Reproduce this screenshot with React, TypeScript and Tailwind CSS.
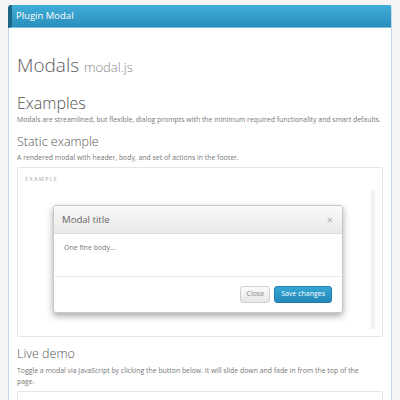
import React from "react";

const App = () => {
  return (
    <div
      className="w-[400px] h-[400px] overflow-hidden bg-[#f4f4f4] pt-[5px] px-[8px]"
      style={{ fontFamily: '"Open Sans", "Noto Sans", sans-serif' }}
    >
      <div className="h-[420px] bg-white border-x border-[#c6d7ee] rounded-t-[3px]">
        {/* panel header */}
        <div className="h-[23px] -ml-px flex items-center bg-gradient-to-b from-[#40aed8] to-[#2a8ebc] border-l-[4px] border-[#1d6584] rounded-tl-[3px] pl-[4px] border-b border-b-[#7cc0de]">
          <span className="text-white text-[9.5px] leading-none">Plugin Modal</span>
        </div>

        <div className="px-[8px] text-[#555]">
          <h1 className="mt-[27px] text-[19px] leading-[20px] font-light text-[#5a5a5a]">
            Modals <span className="text-[13px] text-[#888]">modal.js</span>
          </h1>

          <h2 className="mt-[17px] text-[16px] leading-[18px] font-light">Examples</h2>
          <p className="mt-[3px] text-[6.9px] leading-[10px] text-[#777] whitespace-nowrap">
            Modals are streamlined, but flexible, dialog prompts with the minimum required functionality and smart defaults.
          </p>

          <h3 className="mt-[10px] text-[12.5px] leading-[14px] font-light">Static example</h3>
          <p className="mt-[4px] text-[6.9px] leading-[10px] text-[#777]">
            A rendered modal with header, body, and set of actions in the footer.
          </p>

          {/* example box */}
          <div className="mt-[4px] h-[170px] border border-[#e6e6e6] rounded-[2px] pt-[8px] pl-[7px] pr-[7px] flex flex-col">
            <span className="text-[5.5px] tracking-[1.2px] text-[#bbb] font-semibold leading-[6px]">EXAMPLE</span>
            <div className="flex flex-1 pb-[7px]">
              <div className="flex-1 flex justify-center pt-[23px]">
                <div className="w-[290px] h-[108px] bg-white border border-[#c9c9c9] rounded-[3px] shadow-[0_3px_7px_rgba(0,0,0,0.35)] flex flex-col">
                  <div className="h-[28px] flex items-center justify-between pl-[8px] pr-[9px] bg-gradient-to-b from-[#f9f9f9] to-[#e9e9e9] border-b border-[#dcdcdc] rounded-t-[3px]">
                    <span className="text-[9.6px] text-[#666] leading-none">Modal title</span>
                    <span className="text-[11px] text-[#aaa] leading-none">×</span>
                  </div>
                  <div className="h-[42px] px-[10px] pt-[9px]">
                    <p className="text-[7px] leading-[10px] text-[#777]">One fine body…</p>
                  </div>
                  <div className="flex-1 border-t border-[#ececec] flex items-center justify-end gap-[4px] pl-[10px] pr-[10px]">
                    <button className="h-[17px] px-[5px] text-[7px] text-[#888] bg-gradient-to-b from-[#fbfbfb] to-[#e6e6e6] border border-[#cfcfcf] rounded-[3px]">
                      Close
                    </button>
                    <button className="h-[17px] px-[6px] text-[7px] text-white bg-gradient-to-b from-[#35a6d4] to-[#2389b9] border border-[#1f7fae] rounded-[3px]">
                      Save changes
                    </button>
                  </div>
                </div>
              </div>
              <div className="w-[4px] mt-[8px] bg-[#f1f1f1]"></div>
            </div>
          </div>

          <h3 className="mt-[10px] text-[12.5px] leading-[14px] font-light">Live demo</h3>
          <p className="mt-[4px] max-w-[356px] text-[6.9px] leading-[11px] text-[#777]">
            Toggle a modal via JavaScript by clicking the button below. It will slide down and fade in from the top of the page.
          </p>
          <div className="mt-[4px] h-[40px] border border-[#e6e6e6] rounded-[2px]"></div>
        </div>
      </div>
    </div>
  );
};

export default App;
